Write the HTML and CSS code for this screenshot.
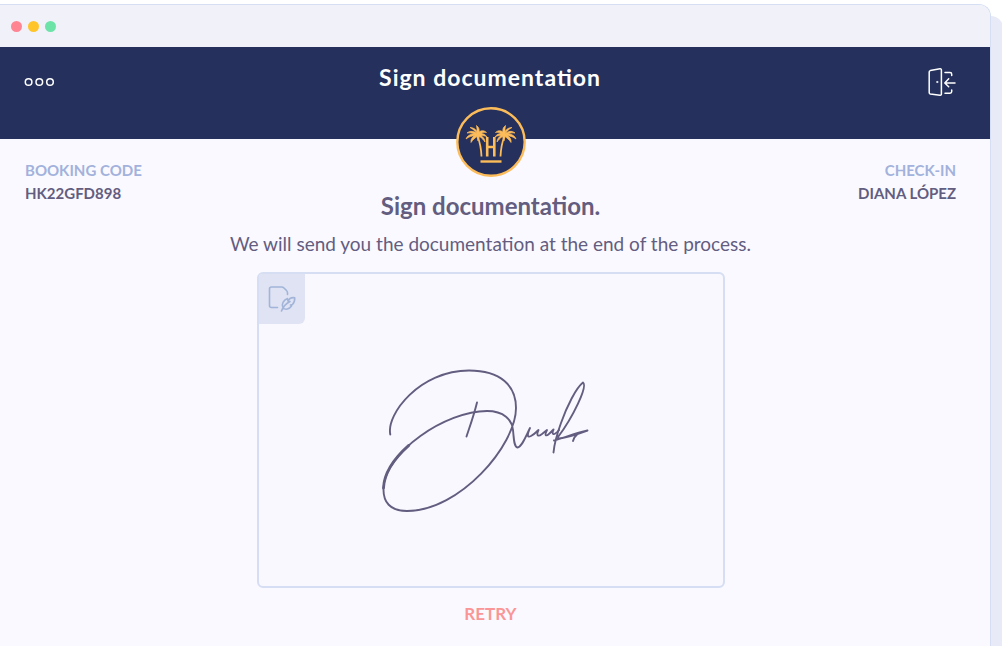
FILE: index.html
```html
<!DOCTYPE html>
<html lang="en">
<head>
<meta charset="utf-8">
<meta name="viewport" content="width=device-width, initial-scale=1">
<title>Sign documentation</title>
<link rel="stylesheet" href="styles.css">
</head>
<body>
<div class="window">
  <div class="titlebar">
    <span class="dot dot-close"></span>
    <span class="dot dot-minimize"></span>
    <span class="dot dot-expand"></span>
  </div>
  <header class="header">
    <button class="icon-button" type="button" aria-label="Menu">
      <svg width="31" height="10" viewBox="0 0 31 10" fill="none" stroke="#fff" stroke-width="1.5"><circle cx="4.600" cy="5" r="3.3"/><circle cx="15.300" cy="5" r="3.3"/><circle cx="26" cy="5" r="3.3"/></svg>
    </button>
    <h1 class="header-title">Sign documentation</h1>
    <button class="icon-button icon-exit" type="button" aria-label="Exit">
      <svg width="28" height="28" viewBox="0 0 28 28" fill="none" stroke="#fff" stroke-width="1.500" stroke-linecap="round" stroke-linejoin="round"><path d="M1.2 4 Q1.2 2.9 2.3 2.6 L12 .8 Q13.4 .6 13.4 2 V26 Q13.4 27.4 12 27.2 L2.3 26 Q1.2 25.8 1.2 24.6Z"/><circle cx="9.2" cy="14" r=".7" fill="#fff" stroke-width=".6"/><path d="M17 4.6H22Q23.7 4.600 23.7 6.300V7.400M23.7 22V23.600Q23.7 25.300 22 25.300H17M27 15H17.200M20.700 10.800 16.800 15 20.700 18.800"/></svg>
    </button>
    <svg class="logo" viewBox="0 0 70 70" role="img" aria-label="Hotel logo">
      <circle cx="35" cy="35" r="33.700" fill="#25315c" stroke="#fdbc5a" stroke-width="2.400"/>
      <g id="palm" fill="#fdbc5a">
        <path stroke="#fdbc5a" stroke-width=".7" stroke-linejoin="round" d="M21 26.500C18 24 14 23.500 11 26 14 25.500 16 26 18 27 14 27 11 29 10 32 13 29.500 16 29 19 28.500 16 30 14.500 32.500 15 35.500 17 32.500 19 31 21 29.500L22 34 23.500 29.500C26 31 27.500 33 29 35 29 32 27 30 25 28.500 27.500 28.500 29.500 29 31 30 29.500 27.500 27 26.500 25 26.500 26.500 25.500 28.500 25 30.500 25.500 28 23 25 23.500 23 25 23.500 22.500 23 20.500 20.500 18.500 21 20.500 21 22.500 21 24.500 19.500 22 17 20.500 14 20.500 17 22 19 24 21 26.500Z"/>
        <path d="M21.500 29Q25 38 25.500 49.500" fill="none" stroke="#fdbc5a" stroke-width="1.800"/>
      </g>
      <use href="#palm" transform="translate(70 0) scale(-1 1)"/>
      <path d="M31.200 30V49.500M38.300 30V49.500M31.200 40H38.300" fill="none" stroke="#fdbc5a" stroke-width="2.600"/>
      <path d="M24.500 54.500H45.500" stroke="#fdbc5a" stroke-width="2.400"/>
    </svg>
  </header>
  <main class="content">
    <dl class="detail">
      <dt class="detail-label">BOOKING CODE</dt>
      <dd class="detail-value">HK22GFD898</dd>
    </dl>
    <dl class="detail detail-end">
      <dt class="detail-label">CHECK-IN</dt>
      <dd class="detail-value">DIANA LÓPEZ</dd>
    </dl>
    <section class="signing">
      <h2 class="signing-title">Sign documentation.</h2>
      <p class="signing-text">We will send you the documentation at the end of the process.</p>
      <div class="pad">
        <span class="pad-badge">
          <svg width="28" height="28" viewBox="0 0 28 28" fill="none" stroke="#a2b5d9" stroke-width="1.600" stroke-linecap="round" stroke-linejoin="round"><path d="M9.500 22.500H3.500Q1.500 22.500 1.500 20.500V4Q1.500 2 3.500 2H13.500Q15 2 16 3L18.500 5.500Q19.500 6.500 19.500 8V9.500M13.500 26C15 22 18 18.500 22 16.500M15 23C13 19 15.500 15 19.500 13.500L20 16 22 13.500Q24 12.300 26.700 12.800C27 17 25.500 18.500 24.500 19.500L22.500 20 23.500 21C21 24.500 17.500 25 15 23Z"/></svg>
        </span>
        <svg class="signature" viewBox="381 367 210 148" role="img" aria-label="Signature" fill="none" stroke="#635d80" stroke-width="1.900" stroke-linecap="round" stroke-linejoin="round">
          <path d="M390.300 434.500C386 414 420 370.500 469 370.500C501 370.500 516 386 516 408C516 445 460 511 407 511C390 511 383 502 383.500 488C385 452 446 411 487 411C504 411 512 420 513 430C514 440 514 447 517.500 447.500C522 447 526 436 530 428C527 435 527 438 531 436C535 434 536 432 538.500 430C536 436 538 437 542 434L547 430C544 436 546 437 550 433L553.500 429.500C551 435 554 436 559 430"/>
          <path d="M383.500 488C384.100 473.600 394.200 458.400 408.800 445.400" stroke-width="2.800"/>
          <path d="M477 402.500C474 415 470 426 466.500 436.500M553.500 452.500C554.500 441 557 434 561 423C567 406 576 388 583 382.500C588 386 573 417 558 437M554 440.500C566 437 576 433 587.500 430.500C578 434 566 438 556 439M577.500 434Q574 437 573 441"/>
        </svg>
      </div>
      <button class="retry" type="button">RETRY</button>
    </section>
  </main>
</div>
</body>
</html>
```
FILE: styles.css
```css
* {
  box-sizing: border-box;
}

body {
  margin: 0;
  min-height: 100vh;
  display: flex;
  padding: 4px 11px 0 0;
  background: #fff;
  color: #635d80;
  font-family: Lato, "Open Sans", sans-serif;
  overflow-x: hidden;
}

.window {
  flex: 1;
  border: 1px solid #d5def2;
  border-width: 1px 1px 0 0;
  border-radius: 0 12px 0 0;
  background: #faf9ff;
  box-shadow: 12px 12px 0 #e8ebf7;
}

.titlebar {
  display: flex;
  align-items: center;
  gap: 6px;
  height: 42px;
  padding-left: 11px;
  border-radius: 0 11px 0 0;
  background: #f0f1f9;
}

.dot {
  width: 11px;
  height: 11px;
  border-radius: 50%;
}

.dot-close {
  background: #ff8593;
}

.dot-minimize {
  background: #ffc52b;
}

.dot-expand {
  background: #6de3a7;
}

.header {
  position: relative;
  display: grid;
  grid-template-columns: 1fr auto 1fr;
  align-items: start;
  height: 92px;
  padding: 16px 34px 0 24px;
  background: #25315c;
}

.icon-button {
  display: flex;
  align-items: center;
  justify-self: start;
  height: 38px;
  padding: 0;
  border: 0;
  background: none;
}

.icon-exit {
  justify-self: end;
}

.header-title {
  margin: 0;
  color: #fff;
  font-size: 23px;
  line-height: 28px;
  letter-spacing: 1px;
  font-feature-settings: "liga" 1;
}

.logo {
  position: absolute;
  top: 60px;
  left: calc(50% - 4px);
  width: 70px;
  margin-left: -35px;
}

.content {
  display: grid;
  grid-template-columns: 1fr 1fr;
  padding: 20px 34px 20px 25px;
}

.detail {
  margin: 0;
  font-size: 15px;
  font-weight: 700;
  line-height: 23px;
}

.detail-end {
  text-align: right;
}

.detail-label {
  color: #a2b2dc;
}

.detail-value {
  margin: 0;
}

.signing {
  grid-column: 1 / -1;
  display: flex;
  flex-direction: column;
  align-items: center;
}

.signing-title {
  margin: -14px 0 0;
  font-size: 24px;
  line-height: 30px;
}

.signing-text {
  margin: 12px 0 17px;
  font-size: 19px;
  line-height: 22px;
  text-align: center;
}

.pad {
  position: relative;
  display: flex;
  justify-content: center;
  width: 100%;
  max-width: 468px;
  padding: 93px 20px 71px;
  border: 2px solid #d5def2;
  border-radius: 6px;
  background: #f8f8fe;
}

.pad-badge {
  position: absolute;
  top: 0;
  left: 0;
  padding: 11px 9px;
  border-radius: 3px 0 6px 0;
  background: #dfe3f3;
  line-height: 0;
}

.signature {
  width: 210px;
  margin-right: 10px;
}

.retry {
  margin-top: 16px;
  padding: 0;
  border: 0;
  background: none;
  color: #fa9696;
  font-family: inherit;
  font-size: 17px;
  font-weight: 700;
  line-height: 20px;
}
```
